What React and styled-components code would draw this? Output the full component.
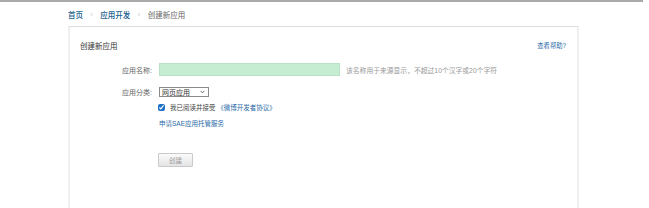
import React from "react";
import styled, { createGlobalStyle } from "styled-components";

const GlobalStyle = createGlobalStyle`
    html, body {
        margin: 0;
        padding: 0;
        background: #fff;
    }
    body {
        font-family: "Liberation Sans", "Noto Sans CJK SC", sans-serif;
        font-size: 7.5px;
        color: #333;
        overflow: hidden;
    }
`;

const TopLine = styled.div`
    width: 643px;
    height: 2px;
    background: #a9a9a9;
`;

const Crumbs = styled.nav`
    display: flex;
    align-items: center;
    gap: 7.5px;
    height: 24px;
    margin-left: 68px;
    font-size: 7.5px;
`;

const CrumbLink = styled.a`
    color: #23618f;
    font-weight: 500;
    text-decoration: none;
`;

const CrumbSep = styled.span`
    color: #c4c4c4;
    font-size: 7px;
`;

const CrumbCurrent = styled.span`
    color: #666;
`;

const Panel = styled.section`
    box-sizing: border-box;
    width: 511px;
    min-height: 190px;
    margin-left: 68px;
    border: 2px solid #efefef;
    border-top: 1px solid #dcdcdc;
    border-bottom: none;
`;

const PanelHead = styled.header`
    display: flex;
    justify-content: space-between;
    align-items: center;
    height: 10px;
    padding: 13px 11px 0 10px;
`;

const Title = styled.h2`
    margin: 0;
    font-size: 7.5px;
    font-weight: normal;
    color: #333;
`;

const Help = styled.a`
    font-size: 6.3px;
    color: #2b6aa8;
    text-decoration: none;
`;

const Form = styled.form`
    display: flex;
    flex-direction: column;
    margin-top: 13px;
`;

const Row = styled.div`
    display: flex;
    align-items: center;
    gap: 7px;
    margin-top: ${(p) => p.$top || 0}px;
    height: ${(p) => p.$h || 10}px;
`;

const Label = styled.label`
    width: 82px;
    text-align: right;
    color: #666;
    font-size: 7px;
`;

const Indent = styled.div`
    width: 82px;
`;

const NameInput = styled.input`
    box-sizing: border-box;
    width: 181px;
    height: 13px;
    margin: 0;
    border: 1px solid #b9e2c4;
    background: #c6ecd1;
    outline: none;
`;

const Hint = styled.span`
    margin-left: -1px;
    font-size: 6.8px;
    color: #999;
    white-space: nowrap;
`;

const SelectBox = styled.div`
    box-sizing: border-box;
    display: flex;
    align-items: center;
    justify-content: space-between;
    width: 50px;
    height: 10px;
    padding: 0 3px 0 2px;
    border: 1px solid #8a8a8a;
    font-size: 7px;
    color: #333;
`;

const Check = styled.input`
    width: 7px;
    height: 7px;
    margin: 0 -2px 0 -1px;
    accent-color: #1b6fc4;
`;

const CheckText = styled.span`
    font-size: 6.5px;
    color: #444;
    white-space: nowrap;
`;

const Link = styled.a`
    font-size: 6.5px;
    color: #2b6aa8;
    text-decoration: none;
    white-space: nowrap;
`;

const Button = styled.button`
    box-sizing: border-box;
    width: 35px;
    height: 14px;
    margin-left: -1px;
    padding: 0;
    border: 1px solid #c9c9c9;
    border-radius: 1px;
    background: linear-gradient(#fbfbfb, #e4e4e4);
    font-family: inherit;
    font-size: 6.5px;
    color: #999;
`;

function Chevron() {
    return (
        <svg width="5" height="4" viewBox="0 0 5 4">
            <path d="M0.6 0.8 L2.5 2.9 L4.4 0.8" fill="none" stroke="#555" strokeWidth="0.8" />
        </svg>
    );
}

export default function App() {
    return (
        <>
            <GlobalStyle />
            <TopLine />
            <Crumbs>
                <CrumbLink href="#">首页</CrumbLink>
                <CrumbSep>›</CrumbSep>
                <CrumbLink href="#">应用开发</CrumbLink>
                <CrumbSep>›</CrumbSep>
                <CrumbCurrent>创建新应用</CrumbCurrent>
            </Crumbs>
            <Panel>
                <PanelHead>
                    <Title>创建新应用</Title>
                    <Help href="#">查看帮助?</Help>
                </PanelHead>
                <Form onSubmit={(e) => e.preventDefault()}>
                    <Row $h={13}>
                        <Label>应用名称:</Label>
                        <NameInput type="text" />
                        <Hint>该名称用于来源显示，不超过10个汉字或20个字符</Hint>
                    </Row>
                    <Row $top={11}>
                        <Label>应用分类:</Label>
                        <SelectBox>
                            <span>网页应用</span>
                            <Chevron />
                        </SelectBox>
                    </Row>
                    <Row $top={5}>
                        <Indent />
                        <Check type="checkbox" defaultChecked />
                        <CheckText>
                            我已阅读并接受 <Link href="#">《微博开发者协议》</Link>
                        </CheckText>
                    </Row>
                    <Row $top={6}>
                        <Indent />
                        <Link href="#">申请SAE应用托管服务</Link>
                    </Row>
                    <Row $top={25} $h={14}>
                        <Indent />
                        <Button type="submit">创建</Button>
                    </Row>
                </Form>
            </Panel>
        </>
    );
}
